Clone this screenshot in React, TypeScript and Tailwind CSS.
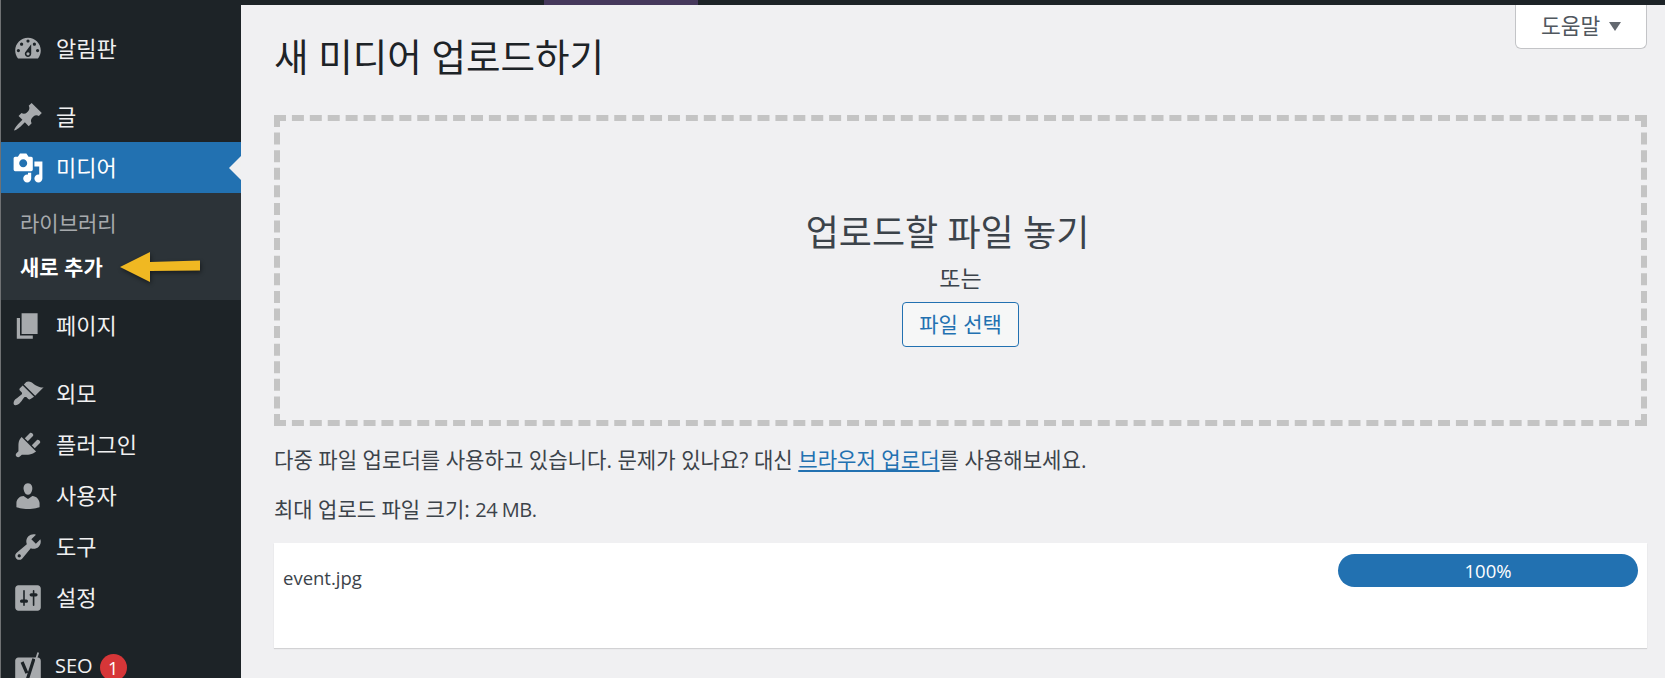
const FONT = "font-['Open_Sans','Noto_Sans_CJK_KR',sans-serif]";

const ICONS: Record<string, string> = {
  dashboard:
    "M3.76 16h12.48c1.1-1.37 1.76-3.11 1.76-5 0-4.42-3.58-8-8-8s-8 3.58-8 8c0 1.89.66 3.63 1.76 5zM10 4c.55 0 1 .45 1 1s-.45 1-1 1-1-.45-1-1 .45-1 1-1zM6 6c.55 0 1 .45 1 1s-.45 1-1 1-1-.45-1-1 .45-1 1-1zm8 0c.55 0 1 .45 1 1s-.45 1-1 1-1-.45-1-1 .45-1 1-1zm-5.37 5.55L12 7v6c0 1.1-.9 2-2 2s-2-.9-2-2c0-.57.24-1.08.63-1.45zM4 10c.55 0 1 .45 1 1s-.45 1-1 1-1-.45-1-1 .45-1 1-1zm12 0c.55 0 1 .45 1 1s-.45 1-1 1-1-.45-1-1 .45-1 1-1zm-5 3c0-.55-.45-1-1-1s-1 .45-1 1 .45 1 1 1 1-.45 1-1z",
  post: "M10.44 3.02l1.82-1.82 6.36 6.35-1.83 1.82c-1.05-.68-2.48-.57-3.41.36l-.75.75c-.92.93-1.04 2.35-.35 3.41l-1.83 1.82-2.41-2.41-2.8 2.79c-.42.42-3.38 2.71-3.8 2.29s1.86-3.39 2.28-3.81l2.79-2.79L4.1 9.36l1.83-1.82c1.05.69 2.48.57 3.4-.36l.75-.75c.93-.92 1.05-2.35.36-3.41z",
  media:
    "M13 11V4c0-.55-.45-1-1-1h-1.67L9 1H5L3.67 3H2c-.55 0-1 .45-1 1v7c0 .55.45 1 1 1h10c.55 0 1-.45 1-1zM7 4.5c1.38 0 2.5 1.12 2.5 2.5S8.38 9.5 7 9.5 4.5 8.38 4.5 7 5.62 4.5 7 4.5zM14 6h5v10.5c0 1.38-1.12 2.5-2.5 2.5S14 17.88 14 16.5s1.12-2.5 2.5-2.5c.17 0 .34.02.5.05V9h-3V6zm-4 8.05V13h2v3.5c0 1.38-1.12 2.5-2.5 2.5S7 17.88 7 16.5 8.12 14 9.5 14c.17 0 .34.02.5.05z",
  page: "M6 15V2h10v13H6zm-1 1h8v2H3V5h2v11z",
  appearance:
    "M14.48 11.06L7.41 3.99l1.5-1.5c.5-.56 2.3-.47 3.51.32 1.21.8 1.43 1.28 2.91 2.1 1.18.64 2.45 1.26 4.45.85zm-.71.71L6.7 4.7 4.93 6.47c-.39.39-.39 1.02 0 1.41l1.06 1.06c.39.39.39 1.03 0 1.42-.6.6-1.43 1.11-2.21 1.69-.35.26-.7.53-1.01.84C1.43 13.71 1 14.77 1 16c0 .55.45 1 1 1 1.23 0 2.29-.43 3.16-1.68.31-.31.58-.66.84-1.01.58-.78 1.09-1.61 1.69-2.21.39-.39 1.03-.39 1.42 0l1.06 1.06c.39.39 1.02.39 1.41 0z",
  plugins:
    "M13.11 4.36L9.87 7.6 8 5.73l3.24-3.24c.35-.34 1.05-.2 1.56.32.52.51.66 1.21.31 1.55zm-8 1.77l.91-1.12 9.01 9.01-1.19.84c-.71.71-2.63 1.16-3.82 1.16H6.14L4.9 17.26c-.59.59-1.54.59-2.12 0-.59-.58-.59-1.53 0-2.12l1.24-1.24v-3.88c0-1.13.4-3.19 1.09-3.89zm7.26 3.97l3.24-3.24c.34-.35 1.04-.21 1.55.31.52.51.66 1.21.31 1.55l-3.24 3.25z",
  users:
    "M10 9.25c-2.27 0-2.73-3.44-2.73-3.44C7 4.02 7.82 2 9.97 2c2.16 0 2.98 2.02 2.71 3.81 0 0-.41 3.44-2.68 3.44zm0 2.57L12.72 10c2.39 0 4.52 2.33 4.52 4.53v2.49s-3.65 1.13-7.24 1.13c-3.65 0-7.24-1.13-7.24-1.13v-2.49c0-2.25 1.94-4.48 4.47-4.48z",
  tools:
    "M16.68 9.77c-1.34 1.34-3.3 1.67-4.95.99l-5.41 6.52c-.99.99-2.59.99-3.58 0s-.99-2.59 0-3.57l6.52-5.42c-.68-1.65-.35-3.61.99-4.95 1.28-1.28 3.12-1.62 4.72-1.06l-2.89 2.89 2.82 2.82 2.86-2.87c.53 1.58.18 3.39-1.08 4.65zM3.81 16.21c.4.39 1.04.39 1.43 0 .4-.4.4-1.04 0-1.43-.39-.4-1.03-.4-1.43 0-.39.39-.39 1.03 0 1.43z",
  settings:
    "M18 16V4c0-1.1-.9-2-2-2H4c-1.1 0-2 .9-2 2v12c0 1.1.9 2 2 2h12c1.1 0 2-.9 2-2zM8 11h1c.55 0 1 .45 1 1s-.45 1-1 1H8v1.5c0 .28-.22.5-.5.5s-.5-.22-.5-.5V13H6c-.55 0-1-.45-1-1s.45-1 1-1h1V5.500c0-.28.22-.5.5-.5s.5.22.5.5V11zm5-2h-1c-.55 0-1-.45-1-1s.45-1 1-1h1V5.500c0-.28.22-.5.5-.5s.5.22.5.5V7h1c.55 0 1 .45 1 1s-.45 1-1 1h-1v5.500c0 .28-.22.5-.5.5s-.5-.22-.5-.5V9z",
};

function MenuIcon({ name, active }: { name: string; active?: boolean }) {
  if (name === "seo") {
    // yoast mark: grey box, dark y, slash poking out the top
    return (
      <svg viewBox="0 0 20 20" className="w-[32px] h-[32px] shrink-0 overflow-visible">
        <path d="M4 4.700h12c1.200 0 2 .8 2 2V20H2V6.700c0-1.200.8-2 2-2z" fill="#a7aaad" />
        <path d="M6.300 7.500l3 7M13.700 5.500L9.700 18" fill="none" stroke="#1d2327" strokeWidth="2" />
        <path d="M16.400 1.600L14.800 6.500" fill="none" stroke="#a7aaad" strokeWidth="1.100" />
      </svg>
    );
  }
  return (
    <svg viewBox="0 0 20 20" className={`w-[32px] h-[32px] shrink-0 ${active ? "fill-white" : "fill-[#a7aaad]"}`}>
      <path d={ICONS[name]} />
    </svg>
  );
}

function MenuItem({ icon, label, active, badge, gap }: { icon: string; label: string; active?: boolean; badge?: string; gap?: boolean }) {
  return (
    <a
      className={`relative flex items-center h-[51px] pl-[11px] ${badge ? "gap-[11px] text-[20px]" : "gap-[12px] text-[22px]"} ${gap ? "mt-[17px]" : ""} ${active ? "bg-[#2271b1] text-white" : "text-[#f0f0f1]"}`}
    >
      <MenuIcon name={icon} active={active} />
      <span>{label}</span>
      {badge && (
        <span className="flex items-center justify-center w-[27px] h-[27px] -ml-[4px] mt-[4px] rounded-full bg-[#d63638] text-white text-[18px] leading-none">
          {badge}
        </span>
      )}
      {active && (
        <span className="absolute right-0 top-[14px] w-0 h-0 border-y-[12px] border-y-transparent border-r-[12px] border-r-[#f0f0f1]" />
      )}
    </a>
  );
}

function Sidebar() {
  return (
    <aside className="w-[241px] shrink-0 border-l border-l-[#6f7173] bg-[#1d2327] pt-[18px]">
      <MenuItem icon="dashboard" label="알림판" />
      <MenuItem icon="post" label="글" gap />
      <MenuItem icon="media" label="미디어" active />
      <div className="relative h-[107px] bg-[#2c3338] pl-[19px] pt-[9px]">
        <div className="h-[44px] flex items-center text-[#a7aaad] text-[21px]">라이브러리</div>
        <div className="h-[44px] flex items-center text-white font-bold text-[21px]">새로 추가</div>
        <svg viewBox="0 0 80 32" className="absolute left-[119px] top-[58px] w-[80px] h-[32px] drop-shadow-[1px_2px_2px_rgba(0,0,0,0.45)]">
          <path d="M0 16 30 1v10l50-1.500v10L30 20v11z" fill="#f0b822" />
        </svg>
      </div>
      <MenuItem icon="page" label="페이지" />
      <MenuItem icon="appearance" label="외모" gap />
      <MenuItem icon="plugins" label="플러그인" />
      <MenuItem icon="users" label="사용자" />
      <MenuItem icon="tools" label="도구" />
      <MenuItem icon="settings" label="설정" />
      <MenuItem icon="seo" label="SEO" badge="1" gap />
    </aside>
  );
}

export default function App() {
  return (
    <div className={`h-[678px] w-[1665px] overflow-hidden flex flex-col bg-[#f0f0f2] ${FONT}`}>
      <div className="h-[5px] shrink-0 bg-[#1d2327] border-l border-l-[#6f7173]">
        <div className="ml-[543px] w-[154px] h-full bg-[#46395c]" />
      </div>
      <div className="flex flex-1 min-h-0">
        <Sidebar />
        <main className="flex-1 pl-[33px] pr-[18px] text-[#3c434a]">
          <div className="flex justify-between items-start h-[110px]">
            <h1 className="pt-[24px] text-[37.5px] leading-[56px] text-[#1d2327]">새 미디어 업로드하기</h1>
            <button className="flex items-center gap-[9px] w-[132px] h-[44px] pl-[25px] bg-white border border-t-0 border-[#c3c4c7] rounded-b-[6px] text-[#50575e] text-[21.5px]">
              도움말
              <span className="w-0 h-0 border-x-[6px] border-x-transparent border-t-[9px] border-t-[#646970]" />
            </button>
          </div>
          <section className="h-[311px] border-[6px] border-dashed border-[#c4c4c4] flex flex-col items-center pt-[90px]">
            <p className="pr-[26px] text-[36px] leading-[44px]">업로드할 파일 놓기</p>
            <p className="text-[23px] leading-[28px] mt-[9px]">또는</p>
            <button className="mt-[10px] w-[117px] h-[45px] rounded-[4px] border border-[#2271b1] bg-[#f6f7f7] text-[#2271b1] text-[21px]">
              파일 선택
            </button>
          </section>
          <p className="mt-[19px] text-[21.1px] leading-[30px]">
            다중 파일 업로더를 사용하고 있습니다. 문제가 있나요? 대신 <a className="text-[#2271b1] underline">브라우저 업로더</a>를 사용해보세요.
          </p>
          <p className="mt-[19px] text-[21px] leading-[30px]">최대 업로드 파일 크기: <span className="text-[20px] tracking-[-0.5px]">24 MB.</span></p>
          <div className="mt-[18px] h-[105px] bg-white shadow-[0_1px_1px_rgba(0,0,0,0.12)] flex justify-between pl-[9px] pr-[9px] pt-[11px]">
            <div className="text-[18.5px] leading-[48px]">event.jpg</div>
            <div className="w-[300px] h-[33px] rounded-full bg-[#2271b1] text-white text-[18.5px] leading-[33px] text-center">100%</div>
          </div>
        </main>
      </div>
    </div>
  );
}
